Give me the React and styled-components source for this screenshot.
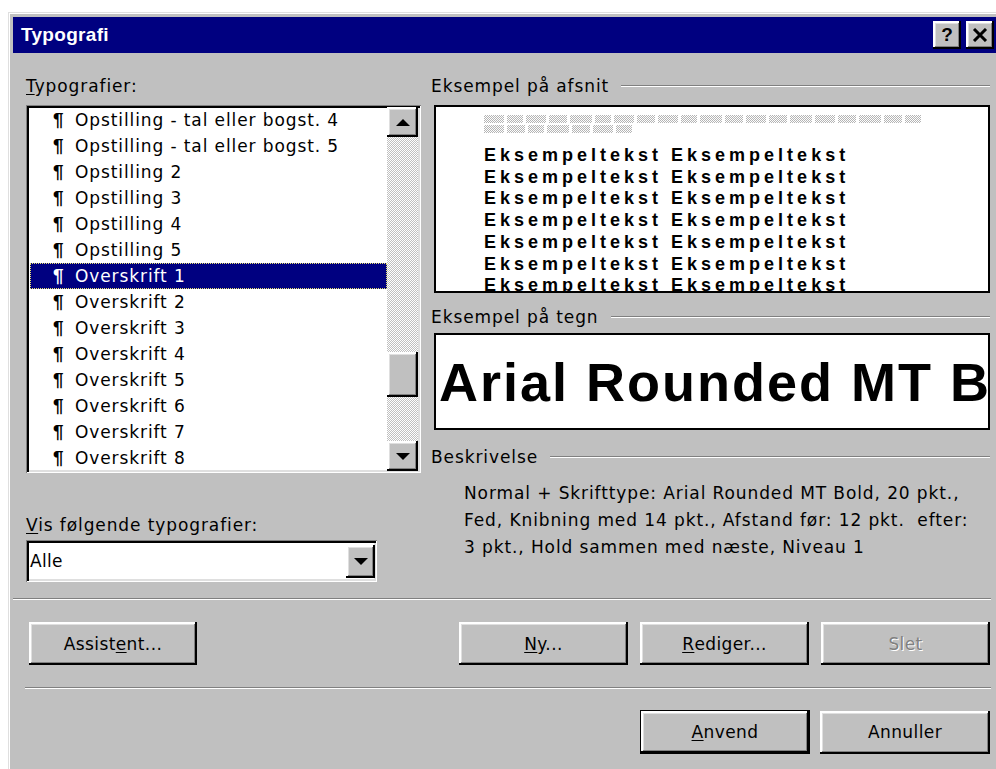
import React from 'react'
import styled, { createGlobalStyle, css } from 'styled-components'

const UI_FONT = `"DejaVu Sans", "Noto Sans", sans-serif`

const GlobalStyle = createGlobalStyle`
  html, body {
    margin: 0;
    padding: 0;
    background: #fff;
    overflow: hidden;
  }
  body {
    width: 996px;
    height: 769px;
  }
`

const raised = css`
  background: #c0c0c0;
  box-shadow: inset -2px -2px 0 #000, inset 2px 2px 0 #fff, inset -3px -3px 0 #808080, inset 3px 3px 0 #dfdfdf;
`

const sunken = css`
  box-shadow: inset 1px 1px 0 #808080, inset -1px -1px 0 #fff, inset 3px 3px 0 #000, inset -3px -3px 0 #dfdfdf;
`

const Window = styled.div`
  margin: 12px 0 0 8px;
  width: 1000px;
  height: 757px;
  overflow: hidden;
  box-sizing: border-box;
  padding: 4px 0 0 4px;
  background: #c0c0c0;
  border-top: 1px solid #dfdfdf;
  border-left: 1px solid #dfdfdf;
  box-shadow: inset 1px 1px 0 #fff;
  display: flex;
  flex-direction: column;
  font-family: ${UI_FONT};
  font-size: 17px;
  letter-spacing: 0.9px;
  color: #000;
`

const TitleBar = styled.div`
  height: 36px;
  flex-shrink: 0;
  display: flex;
  align-items: center;
  padding: 0 14px 0 8px;
  background: #000080;
  color: #fff;
`

const Title = styled.div`
  font-family: "Liberation Sans", Arial, sans-serif;
  font-weight: bold;
  font-size: 19px;
  letter-spacing: 0.3px;
`

const TitleButtons = styled.div`
  margin-left: auto;
  display: flex;
  gap: 5px;
`

const TitleButton = styled.div`
  ${raised};
  width: 28px;
  height: 28px;
  display: flex;
  align-items: center;
  justify-content: center;
  color: #000;
  font-family: "Liberation Sans", Arial, sans-serif;
  font-weight: bold;
  font-size: 19px;
  letter-spacing: 0;
`

const Body = styled.div`
  display: flex;
  flex-direction: column;
  padding-top: 23px;
`

const MainGrid = styled.div`
  display: grid;
  grid-template-columns: 395px 559px;
  column-gap: 10px;
  margin-left: 13px;
  align-items: start;
`

const Column = styled.div`
  display: flex;
  flex-direction: column;
`

const Label = styled.div`
  height: 20px;
  line-height: 20px;
  margin-top: ${({ $gap }) => $gap || 0}px;
  white-space: nowrap;
`

const Key = styled.span`
  text-decoration: underline;
  text-underline-offset: 2px;
`

const Legend = styled.div`
  display: flex;
  align-items: center;
  height: 20px;
  margin-top: ${({ $gap }) => $gap || 0}px;
  white-space: nowrap;

  &::after {
    content: '';
    flex: 1;
    margin-left: 12px;
    height: 0;
    border-top: 1px solid #808080;
    border-bottom: 1px solid #fff;
  }
`

const ListBox = styled.div`
  ${sunken};
  background: #fff;
  margin-top: 9px;
  height: 368px;
  box-sizing: border-box;
  padding: 2px 3px 2px 4px;
  display: flex;
`

const Rows = styled.div`
  flex: 1;
  overflow: hidden;
`

const Row = styled.div`
  height: 26px;
  box-sizing: border-box;
  display: flex;
  align-items: center;
  padding-left: 22px;
  border: 1px dotted transparent;
  white-space: nowrap;
  ${({ $selected }) => $selected && css`
    background: #000080;
    color: #fff;
    border-color: #e8e070;
  `}
`

const Pilcrow = styled.span`
  width: 22px;
  font-family: "Liberation Sans", Arial, sans-serif;
  font-weight: bold;
  font-size: 19px;
  letter-spacing: 0;
`

const ScrollBar = styled.div`
  width: 31px;
  display: flex;
  flex-direction: column;
`

const ArrowButton = styled.div`
  ${raised};
  width: ${({ $w }) => $w || 31}px;
  height: ${({ $h }) => $h || 30}px;
  flex-shrink: 0;
  display: flex;
  align-items: center;
  justify-content: center;
`

const Track = styled.div`
  flex: 1;
  display: flex;
  flex-direction: column;
  background: repeating-conic-gradient(#c0c0c0 0 25%, #fff 0 50%) 0 0 / 2px 2px;
`

const Thumb = styled.div`
  ${raised};
  height: ${({ $size }) => $size}px;
  margin-top: ${({ $offset }) => $offset}px;
`

const Combo = styled.div`
  ${sunken};
  background: #fff;
  margin-top: 5px;
  width: 351px;
  height: 42px;
  box-sizing: border-box;
  padding: 0 2px 0 4px;
  display: flex;
  align-items: center;
  justify-content: space-between;
  letter-spacing: 0.3px;
`

const PreviewBox = styled.div`
  margin: ${({ $gap }) => $gap}px 0 0 3px;
  height: ${({ $h }) => $h}px;
  box-sizing: border-box;
  border: 2px solid #000;
  background: #fff;
  overflow: hidden;
`

const ParagraphSample = styled.div`
  padding: 8px 0 0 48px;
`

const Placeholder = styled.div`
  display: flex;
  gap: 3px;
  height: 8px;
  margin-bottom: 2px;
`

const Word = styled.span`
  height: 8px;
  background: repeating-conic-gradient(#b4b4b4 0 25%, #fff 0 50%) 0 0 / 2px 2px;
`

const SampleText = styled.div`
  margin-top: 12px;
  font-family: "Liberation Sans", Arial, sans-serif;
  font-weight: bold;
  font-size: 18px;
  letter-spacing: 4px;
  line-height: 21.7px;
  white-space: nowrap;
`

const CharSample = styled.div`
  height: 100%;
  display: flex;
  align-items: center;
  padding-left: 3px;
  font-family: "Liberation Sans", Arial, sans-serif;
  font-weight: bold;
  font-size: 54px;
  letter-spacing: 2px;
  line-height: 1;
  white-space: nowrap;
`

const Description = styled.div`
  margin-top: 13px;
  padding-left: 33px;
  line-height: 27px;
`

const Separator = styled.div`
  margin: ${({ $top }) => $top}px 0 0 ${({ $left }) => $left || 0}px;
  width: ${({ $width }) => $width}px;
  border-top: 1px solid #808080;
  border-bottom: 1px solid #fff;
`

const ButtonRow = styled.div`
  margin-top: ${({ $top }) => $top}px;
  width: 978px;
  box-sizing: border-box;
  padding: 0 1px 0 16px;
  display: flex;
  align-items: center;
  gap: ${({ $gap }) => $gap || 12}px;
`

const Button = styled.div`
  ${raised};
  width: ${({ $w }) => $w || 169}px;
  height: 43px;
  box-sizing: border-box;
  display: flex;
  align-items: center;
  justify-content: center;
  letter-spacing: 0.4px;
  ${({ $push }) => $push && css`margin-left: auto;`}
  ${({ $disabled }) => $disabled && css`
    color: #808080;
    text-shadow: 1px 1px 0 #fff;
  `}
  ${({ $default }) => $default && css`
    height: 44px;
    border: 1px solid #000;
  `}
`

const Arrow = ({ down }) => (
  <svg width="14" height="7" viewBox="0 0 14 7">
    <polygon points={down ? '0,0 14,0 7,7' : '0,7 14,7 7,0'} fill="#000" />
  </svg>
)

const styles = [
  'Opstilling - tal eller bogst. 4',
  'Opstilling - tal eller bogst. 5',
  'Opstilling 2',
  'Opstilling 3',
  'Opstilling 4',
  'Opstilling 5',
  'Overskrift 1',
  'Overskrift 2',
  'Overskrift 3',
  'Overskrift 4',
  'Overskrift 5',
  'Overskrift 6',
  'Overskrift 7',
  'Overskrift 8',
]

// greyed-out words of the preceding paragraph
const prevWords = [
  [20, 16, 20, 18, 22, 16, 20, 18, 20, 16, 22, 18, 20, 18, 22, 20, 18, 22, 18, 16],
  [20, 18, 16, 22, 18, 20, 16],
]

const sampleLines = Array.from({ length: 7 }, () => 'Eksempeltekst Eksempeltekst')

export default function App() {
  return (
    <>
      <GlobalStyle />
      <Window>
        <TitleBar>
          <Title>Typografi</Title>
          <TitleButtons>
            <TitleButton>?</TitleButton>
            <TitleButton>
              <svg width="16" height="14" viewBox="0 0 16 14">
                <path d="M2 1 L14 13 M14 1 L2 13" stroke="#000" strokeWidth="3" />
              </svg>
            </TitleButton>
          </TitleButtons>
        </TitleBar>

        <Body>
          <MainGrid>
            <Column>
              <Label><Key>T</Key>ypografier:</Label>
              <ListBox>
                <Rows>
                  {styles.map((name) => (
                    <Row key={name} $selected={name === 'Overskrift 1'}>
                      <Pilcrow>¶</Pilcrow>
                      {name}
                    </Row>
                  ))}
                </Rows>
                <ScrollBar>
                  <ArrowButton><Arrow /></ArrowButton>
                  <Track>
                    <Thumb $offset={215} $size={45} />
                  </Track>
                  <ArrowButton><Arrow down /></ArrowButton>
                </ScrollBar>
              </ListBox>

              <Label $gap={42}><Key>V</Key>is følgende typografier:</Label>
              <Combo>
                Alle
                <ArrowButton $w={29} $h={33}><Arrow down /></ArrowButton>
              </Combo>
            </Column>

            <Column>
              <Legend>Eksempel på afsnit</Legend>
              <PreviewBox $gap={9} $h={188}>
                <ParagraphSample>
                  {prevWords.map((line, i) => (
                    <Placeholder key={i}>
                      {line.map((w, j) => <Word key={j} style={{ width: w }} />)}
                    </Placeholder>
                  ))}
                  <SampleText>
                    {sampleLines.map((t, i) => <div key={i}>{t}</div>)}
                  </SampleText>
                </ParagraphSample>
              </PreviewBox>

              <Legend $gap={14}>Eksempel på tegn</Legend>
              <PreviewBox $gap={6} $h={97}>
                <CharSample>Arial Rounded MT B</CharSample>
              </PreviewBox>

              <Legend $gap={17}>Beskrivelse</Legend>
              <Description>
                Normal + Skrifttype: Arial Rounded MT Bold, 20 pkt.,<br />
                Fed, Knibning med 14 pkt., Afstand før: 12 pkt.&nbsp; efter:<br />
                3 pkt., Hold sammen med næste, Niveau 1
              </Description>
            </Column>
          </MainGrid>

          <Separator $top={16} $width={978} />

          <ButtonRow $top={22}>
            <Button $w={168}>Assist<Key>e</Key>nt...</Button>
            <Button $push><Key>N</Key>y...</Button>
            <Button><Key>R</Key>ediger...</Button>
            <Button $disabled>Slet</Button>
          </ButtonRow>

          <Separator $top={22} $left={12} $width={966} />

          <ButtonRow $top={21} $gap={10}>
            <Button $w={170} $push $default><Key>A</Key>nvend</Button>
            <Button $w={170}>Annuller</Button>
          </ButtonRow>
        </Body>
      </Window>
    </>
  )
}
